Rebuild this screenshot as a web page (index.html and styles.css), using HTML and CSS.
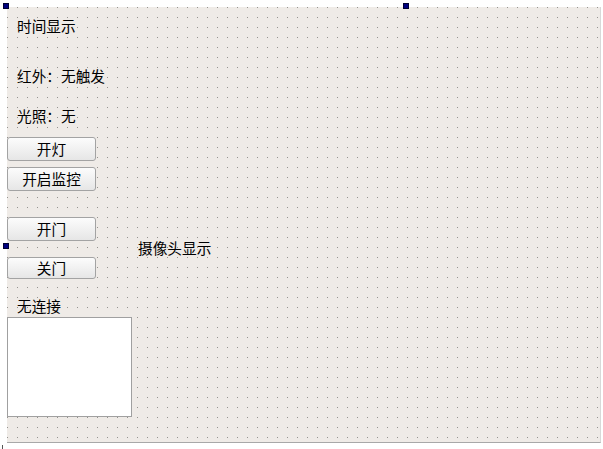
FILE: index.html
```html
<!DOCTYPE html>
<html>
<head>
<meta charset="utf-8">
<link rel="stylesheet" href="styles.css">
</head>
<body>
<div class="stage">
  <div class="form">
    <div class="left">
      <div class="label l-time">时间显示</div>
      <div class="label l-ir">红外：无触发</div>
      <div class="label l-light">光照：无</div>
      <button class="btn b-light">开灯</button>
      <button class="btn b-mon">开启监控</button>
      <button class="btn b-open">开门</button>
      <button class="btn b-close">关门</button>
      <div class="label l-conn">无连接</div>
      <div class="box"></div>
    </div>
    <div class="label cam">摄像头显示</div>
  </div>
  <span class="handle h-tl"></span>
  <span class="handle h-tm"></span>
  <span class="handle h-ml"></span>
  <span class="tick"></span>
</div>
</body>
</html>
```
FILE: styles.css
```css
html, body {
  margin: 0;
  padding: 0;
  background: #ffffff;
}
.stage {
  position: relative;
  width: 603px;
  height: 449px;
  overflow: hidden;
  font-family: "Noto Sans CJK SC", "Noto Sans", sans-serif;
  font-size: 14.67px;
  color: #000;
}
.form {
  margin: 7px 0 0 7px;
  width: 593px;
  height: 435px;
  background-color: #efebe7;
  background-image: radial-gradient(circle at 0.5px 0.5px, rgba(120,118,115,0.75) 0.6px, rgba(0,0,0,0) 0.9px);
  background-size: 10px 10px;
  border-bottom: 1px solid #a8a8a8;
  border-right: 1px solid #d8d8d8;
  display: flex;
  flex-direction: row;
  align-items: flex-start;
}
.left {
  width: 125px;
  display: flex;
  flex-direction: column;
}
.label {
  height: 24px;
  line-height: 24px;
  white-space: nowrap;
}
.left .label {
  padding-left: 10px;
}
.l-time { margin-top: 7px; }
.l-ir { margin-top: 26px; }
.l-light { margin-top: 16px; }
.btn {
  width: 89px;
  height: 24px;
  margin: 0;
  padding: 0;
  font: inherit;
  color: #000;
  line-height: 20px;
  border: 1px solid #a3a3a3;
  border-radius: 3px;
  background: linear-gradient(to bottom, #fcfcfc 0%, #f1f1f1 50%, #e6e6e6 100%);
  text-align: center;
}
.b-light { margin-top: 9px; }
.b-mon { margin-top: 6px; }
.b-open { margin-top: 26px; }
.b-close { margin-top: 16px; height: 22px; line-height: 18px; }
.l-conn { margin-top: 15px; height: 23px; line-height: 23px; }
.box {
  width: 125px;
  height: 100px;
  box-sizing: border-box;
  background: #ffffff;
  border: 1px solid #a0a0a0;
}
.cam {
  margin-top: 229px;
  margin-left: 6px;
}
.handle {
  position: absolute;
  width: 6px;
  height: 6px;
  box-sizing: border-box;
  background: #000080;
  border: 1px solid #000033;
}
.h-tl { left: 3px; top: 3px; }
.h-tm { left: 403px; top: 3px; }
.h-ml { left: 3px; top: 243px; }
.tick {
  position: absolute;
  left: 2px;
  top: 445px;
  width: 1px;
  height: 4px;
  background: #555;
}
```
